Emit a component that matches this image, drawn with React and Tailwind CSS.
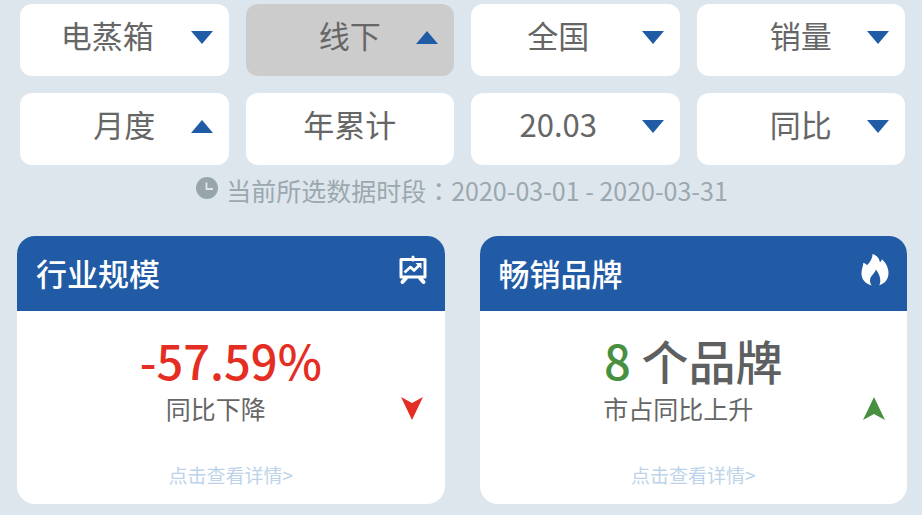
import clsx from "clsx";

const filters = [
    { id: "category", label: "品类", value: "电蒸箱", arrow: "down", shifted: true },
    { id: "channel", label: "渠道", value: "线下", arrow: "up", active: true },
    { id: "region", label: "区域", value: "全国", arrow: "down", shifted: true },
    { id: "metric", label: "指标", value: "销量", arrow: "down" },
    { id: "period", label: "周期", value: "月度", arrow: "up" },
    { id: "ytd", value: "年累计" },
    { id: "month", label: "月份", value: "20.03", arrow: "down", shifted: true },
    { id: "compare", label: "对比", value: "同比", arrow: "down" },
];

function Triangle({ up }) {
    return (
        <svg
            viewBox="0 0 22 13"
            className="pointer-events-none absolute right-4 top-[27px] h-[13px] w-[22px] fill-[#205ba6]"
            aria-hidden="true"
        >
            <path d={up ? "M11 0L22 13H0Z" : "M0 0H22L11 13Z"} />
        </svg>
    );
}

function Filter({ id, label, value, arrow, active, shifted }) {
    const box = clsx(
        "block h-[72px] w-full appearance-none rounded-xl pb-2.5 text-center text-[31px] text-[#666666]",
        active ? "bg-[#cccccc]" : "bg-white",
        shifted && "pr-[34px]"
    );

    if (!arrow) {
        return (
            <button type="button" className={box}>
                {value}
            </button>
        );
    }

    return (
        <div className="relative">
            <select id={id} aria-label={label} className={box} defaultValue={value}>
                <option>{value}</option>
            </select>
            <Triangle up={arrow === "up"} />
        </div>
    );
}

function ClockIcon() {
    return (
        <svg viewBox="0 0 22 22" className="mb-1 size-[22px] shrink-0" aria-hidden="true">
            <circle cx="11" cy="11" r="11" fill="#98a5ac" />
            <path d="M10.5 5.5V12H17" fill="none" stroke="#dde6ec" strokeWidth="1.8" />
        </svg>
    );
}

function BoardIcon() {
    return (
        <svg
            viewBox="0 0 28 30"
            className="h-[30px] w-7"
            fill="none"
            stroke="white"
            strokeWidth="3"
            strokeLinejoin="round"
            aria-hidden="true"
        >
            <path d="M2 4.5H26V22H2Z" />
            <path d="M14 2V5" strokeLinecap="round" />
            <path d="M7 23L3.5 27M21 23L24.5 27" strokeWidth="4" strokeLinecap="round" />
            <path d="M5.5 17.5L11.5 12L15 15.5L20 10.5" strokeWidth="2.6" />
            <path d="M16.5 8H22.5V14Z" fill="white" stroke="none" />
        </svg>
    );
}

function FlameIcon() {
    return (
        <svg viewBox="0 0 28 32" className="h-8 w-7" fill="white" aria-hidden="true">
            <path d="M11.5 0C15.5 1.2 18.3 4 18.8 8C20 7.6 20.6 6.6 20.8 5.2C24.8 8.5 27.5 13.5 27.5 19C27.5 25.5 23.5 29.6 18.2 31.4C20.2 28 19.8 21.5 14.8 15.5C14 19.5 9 21.5 9 26.5C9 28.5 9.6 30 10.6 31.4C5 30 0.5 26 0.5 19.5C0.5 15.5 2 12.5 2.4 8.8C4 9.2 5.2 10 5.8 11.2C9 8.5 11.5 4.5 11.5 0Z" />
        </svg>
    );
}

function Trend({ up }) {
    return (
        <svg
            viewBox="0 0 22 23"
            className={clsx("h-[23px] w-[22px] shrink-0", up ? "fill-[#48903f]" : "fill-[#e52e23]")}
            aria-hidden="true"
        >
            <path d={up ? "M11 0L22 23L11 17L0 23Z" : "M0 0L11 6L22 0L11 23Z"} />
        </svg>
    );
}

function Card({ title, icon, note, up, children }) {
    return (
        <section className="overflow-hidden rounded-[18px] bg-white">
            <header className="flex h-[75px] items-center justify-between bg-[#215ba5] pl-[19px] pr-[18px] text-white">
                <h2 className="text-[31px] font-medium">{title}</h2>
                <div className="pb-2">{icon}</div>
            </header>
            <div className="pb-3.5 pt-[19px] text-center">
                <p className="text-[47px] font-medium leading-[60px] text-[#5d5f61]">{children}</p>
                <div className="flex items-center pl-3.5 pr-[22px]">
                    <p className="flex-1 text-[25px] leading-9 text-[#666666]">{note}</p>
                    <Trend up={up} />
                </div>
                <a href="#detail" className="mt-[34px] inline-block text-[19px] leading-[30px] text-[#bdd3e9]">
                    点击查看详情&gt;
                </a>
            </div>
        </section>
    );
}

export default function App() {
    return (
        <main
            lang="zh-CN"
            className="min-h-screen bg-[#dde6ec] pb-2.5 pl-[17px] pr-[15px] pt-1 font-['Noto_Sans_CJK_SC',sans-serif]"
        >
            <div className="grid grid-cols-4 gap-[17px] pl-[3px] pr-0.5">
                {filters.map((f) => (
                    <Filter key={f.id} {...f} />
                ))}
            </div>

            <div className="mt-[7px] flex items-center justify-center gap-2 text-[25px] leading-9 text-[#9ba8af]">
                <ClockIcon />
                <p>
                    当前所选数据时段
                    <span lang="zh-TW" className="font-['Noto_Sans_CJK_TC',sans-serif]">：</span>
                    2020-03-01 - 2020-03-31
                </p>
            </div>

            <div className="mt-7 grid grid-cols-2 gap-[35px]">
                <Card title="行业规模" icon={<BoardIcon />} note="同比下降">
                    <span className="text-[#e52e23]">-57.59%</span>
                </Card>
                <Card title="畅销品牌" icon={<FlameIcon />} note="市占同比上升" up>
                    <span className="text-[#48903f]">8</span> 个品牌
                </Card>
            </div>
        </main>
    );
}
